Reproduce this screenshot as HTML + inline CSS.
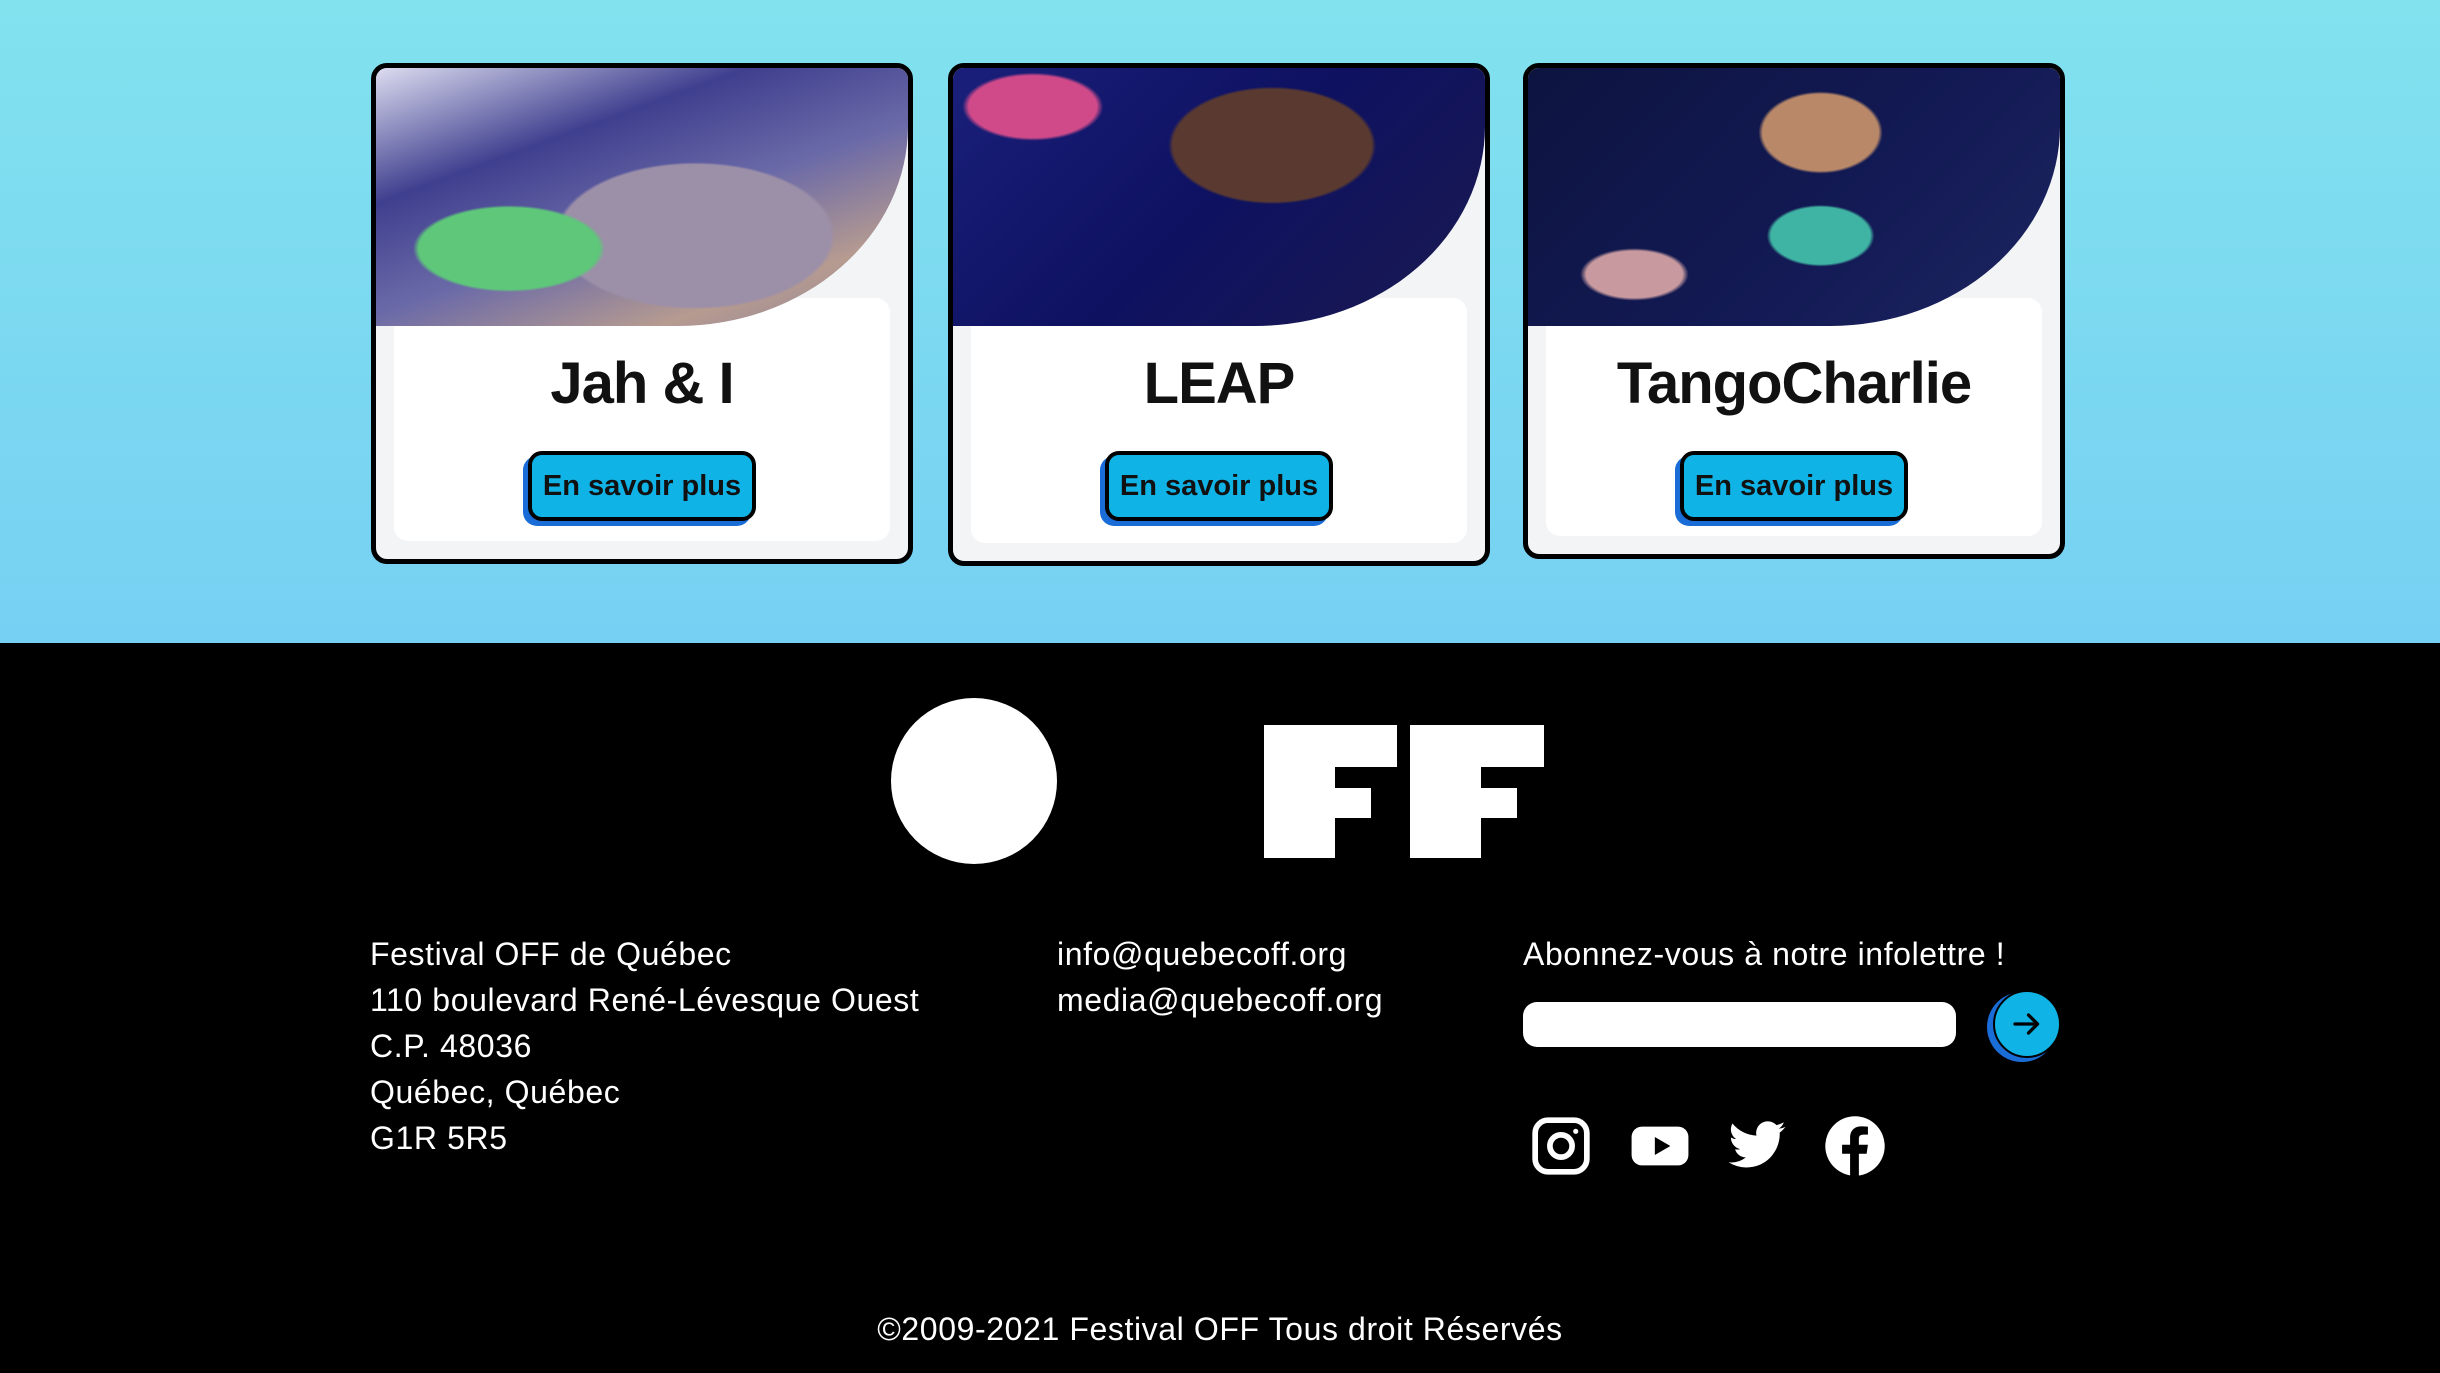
<!DOCTYPE html>
<html><head><meta charset="utf-8"><style>
*{margin:0;padding:0;box-sizing:border-box}
body{width:2440px;height:1373px;overflow:hidden;font-family:"Liberation Sans",sans-serif;position:relative;background:#000}
.top{position:absolute;left:0;top:0;width:2440px;height:643px;background:linear-gradient(#82e2ee,#76d0f3)}
.card{position:absolute;top:63px;width:542px;border:5px solid #000;border-radius:16px;background:#f3f4f6;overflow:hidden}
.panel{position:absolute;left:18px;right:18px;top:230px;bottom:18px;background:#fff;border-radius:14px}
.img{position:absolute;left:0;top:0;width:100%;height:258px;border-bottom-right-radius:230px 200px}
.title{position:absolute;left:0;right:0;top:282px;text-align:center;font-size:58px;font-weight:bold;letter-spacing:-1px;color:#111}
.btn{position:absolute;top:383px;left:50%;transform:translateX(-50%);width:228px;height:70px;background:#10b3e5;border:4px solid #000;border-radius:14px;box-shadow:-5px 5px 0 #1a6dd6;font-size:29px;font-weight:bold;color:#111;text-align:center;line-height:62px}
.ft{position:absolute;color:#fff;font-size:32px;line-height:46px;letter-spacing:0.6px}
.ico{position:absolute;top:1115px}
</style></head><body>
<div class="top"></div>
<div class="card" style="left:371px;height:501px">
<div class="panel"></div>
<div class="img" style="background:radial-gradient(ellipse at 25% 70%,#5ec77a 0 16%,transparent 17%),radial-gradient(ellipse at 60% 65%,#9c8fa8 0 30%,transparent 31%),linear-gradient(160deg,#dcdcf0 0%,#3f3f8f 30%,#6b6aa8 55%,#b69b90 80%,#8a7f9a 100%)"></div>
<div class="title">Jah &amp; I</div><div class="btn">En savoir plus</div></div>
<div class="card" style="left:948px;height:503px">
<div class="panel"></div>
<div class="img" style="background:radial-gradient(ellipse at 60% 30%,#5a3a30 0 22%,transparent 23%),radial-gradient(ellipse at 15% 15%,#d04a8a 0 10%,transparent 11%),linear-gradient(135deg,#1a1f7a,#0e1160 50%,#1b1a50)"></div>
<div class="title">LEAP</div><div class="btn">En savoir plus</div></div>
<div class="card" style="left:1523px;height:496px">
<div class="panel"></div>
<div class="img" style="background:radial-gradient(ellipse at 55% 65%,#3fb4a4 0 12%,transparent 13%),radial-gradient(ellipse at 55% 25%,#b88868 0 14%,transparent 15%),radial-gradient(ellipse at 20% 80%,#c89aa0 0 8%,transparent 9%),linear-gradient(135deg,#0d1440,#131a55 60%,#1d2660)"></div>
<div class="title">TangoCharlie</div><div class="btn">En savoir plus</div></div>

<div style="position:absolute;left:891px;top:698px;width:166px;height:166px;border-radius:50%;background:#fff"></div>
<svg style="position:absolute;left:1264px;top:725px" width="281" height="134" viewBox="0 0 281 134"><path fill="#fff" d="M0 0H133V42H71V63H107V93H71V133H0Z M146 0H280V42H217V63H253V93H217V133H146Z"/></svg>

<div class="ft" style="left:370px;top:931px">Festival OFF de Québec<br>110 boulevard René-Lévesque Ouest<br>C.P. 48036<br>Québec, Québec<br>G1R 5R5</div>
<div class="ft" style="left:1057px;top:931px">info@quebecoff.org<br>media@quebecoff.org</div>
<div class="ft" style="left:1523px;top:931px">Abonnez-vous à notre infolettre !</div>
<div style="position:absolute;left:1523px;top:1002px;width:433px;height:45px;background:#fff;border-radius:14px"></div>
<div style="position:absolute;left:1987px;top:992px;width:70px;height:70px;border-radius:50%;background:#1a6dd6"></div>
<div style="position:absolute;left:1993px;top:990px;width:68px;height:68px;border-radius:50%;background:#10b3e5;border:2px solid #000"></div>
<svg style="position:absolute;left:2009px;top:1006px" width="36" height="36" viewBox="0 0 24 24" fill="none" stroke="#000" stroke-width="2.2" stroke-linecap="round" stroke-linejoin="round"><path d="M4 12h15M13 6l6 6-6 6"/></svg>

<svg class="ico" style="left:1530px" width="62" height="62" viewBox="0 0 24 24" fill="none" stroke="#fff" stroke-width="2.2"><rect x="2" y="2" width="20" height="20" rx="5"/><circle cx="12" cy="12" r="4.3"/><circle cx="17.7" cy="6.3" r="1" fill="#fff" stroke="none"/></svg>
<svg class="ico" style="left:1628px" width="64" height="62" viewBox="0 0 24 24"><rect x="1" y="4.5" width="22" height="15" rx="4" fill="#fff"/><path d="M10 8.5v7l6-3.5z" fill="#000"/></svg>
<svg class="ico" style="left:1725px" width="64" height="62" viewBox="0 0 24 24"><path fill="#fff" d="M23 4.6c-.8.4-1.7.6-2.6.7.9-.6 1.6-1.4 2-2.5-.9.5-1.9.9-2.9 1.1A4.5 4.5 0 0 0 11.8 8 12.8 12.8 0 0 1 2.5 3.3a4.5 4.5 0 0 0 1.4 6c-.7 0-1.4-.2-2-.6 0 2.2 1.5 4 3.6 4.5-.7.2-1.4.2-2 .1.6 1.8 2.2 3.1 4.2 3.1A9 9 0 0 1 1 18.3 12.8 12.8 0 0 0 7.9 20.3c8.3 0 12.9-6.900 12.9-12.900v-.6c.9-.6 1.6-1.400 2.2-2.200z"/></svg>
<svg class="ico" style="left:1824px" width="62" height="62" viewBox="0 0 24 24"><circle cx="12" cy="12" r="11.5" fill="#fff"/><path fill="#000" d="M13.5 24V15h3l.5-3.5h-3.5V9.3c0-1 .3-1.700 1.800-1.700H17V4.500c-.3 0-1.400-.1-2.600-.1-2.600 0-4.300 1.600-4.300 4.400v2.700H7V15h3.100v9z"/></svg>

<div class="ft" style="left:0;width:2440px;text-align:center;top:1306px">©2009-2021 Festival OFF Tous droit Réservés</div>
</body></html>
